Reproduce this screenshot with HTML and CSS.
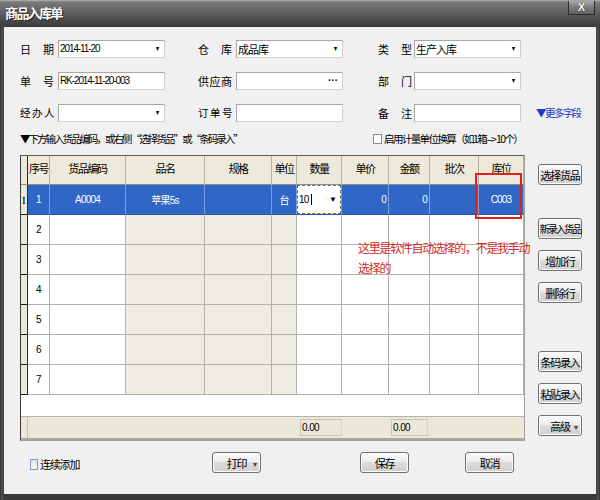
FILE: index.html
```html
<!DOCTYPE html>
<html lang="zh-CN">
<head>
<meta charset="utf-8">
<title>商品入库单</title>
<link rel="stylesheet" href="styles.css">
</head>
<body>
<div class="window">
  <div class="titlebar">
    <span class="title">商品入库单</span>
    <span class="close">X</span>
  </div>
  <div class="client">
    <div class="form">
      <span class="lbl">日期</span><div class="field combo"><span class="val">2014-11-20</span></div>
      <span class="lbl">仓库</span><div class="field combo"><span class="val cjk">成品库</span></div>
      <span class="lbl">类型</span><div class="field combo"><span class="val cjk">生产入库</span></div>
      <span></span>

      <span class="lbl">单号</span><div class="field"><span class="val">RK-2014-11-20-003</span></div>
      <span class="lbl">供应商</span><div class="field dots"></div>
      <span class="lbl">部门</span><div class="field combo"></div>
      <span></span>

      <span class="lbl sp">经办人</span><div class="field combo"></div>
      <span class="lbl sp">订单号</span><div class="field"></div>
      <span class="lbl">备注</span><div class="field"></div>
      <span class="more">▼更多字段</span>
    </div>

    <div class="hint-row">
      <span class="hint">▼下方输入货品编码，或右侧 “选择货品” 或“条码录入”</span>
      <span class="chk"><span class="box"></span>启用计量单位换算（如1箱 --&gt; 10个）</span>
    </div>

    <div class="main">
      <div class="grid">
        <table class="tbl">
          <colgroup>
            <col class="w-rh"><col class="w-no"><col class="w-code"><col class="w-name"><col class="w-spec"><col class="w-unit"><col class="w-qty"><col class="w-price"><col class="w-amt"><col class="w-batch"><col class="w-loc">
          </colgroup>
          <thead>
            <tr>
              <th class="rh"></th><th>序号</th><th>货品编码</th><th>品名</th><th>规格</th><th>单位</th><th>数量</th><th>单价</th><th>金额</th><th>批次</th><th>库位</th>
            </tr>
          </thead>
          <tbody>
            <tr class="sel">
              <td class="rh"><span class="ibeam">I</span></td>
              <td class="ctr">1</td>
              <td class="ctr">A0004</td>
              <td class="ctr">苹果5s</td>
              <td></td>
              <td class="ctr">台</td>
              <td class="edit"><div class="editor"><span>10</span><span class="caret"></span><span class="dd">▼</span></div></td>
              <td class="rt">0</td>
              <td class="rt">0</td>
              <td></td>
              <td class="ctr">C003</td>
            </tr>
            <tr><td class="rh"></td><td class="ctr">2</td><td></td><td class="ro"></td><td class="ro"></td><td class="ro"></td><td></td><td></td><td></td><td></td><td></td></tr>
            <tr><td class="rh"></td><td class="ctr">3</td><td></td><td class="ro"></td><td class="ro"></td><td class="ro"></td><td></td><td></td><td></td><td></td><td></td></tr>
            <tr><td class="rh"></td><td class="ctr">4</td><td></td><td class="ro"></td><td class="ro"></td><td class="ro"></td><td></td><td></td><td></td><td></td><td></td></tr>
            <tr><td class="rh"></td><td class="ctr">5</td><td></td><td class="ro"></td><td class="ro"></td><td class="ro"></td><td></td><td></td><td></td><td></td><td></td></tr>
            <tr><td class="rh"></td><td class="ctr">6</td><td></td><td class="ro"></td><td class="ro"></td><td class="ro"></td><td></td><td></td><td></td><td></td><td></td></tr>
            <tr><td class="rh"></td><td class="ctr">7</td><td></td><td class="ro"></td><td class="ro"></td><td class="ro"></td><td></td><td></td><td></td><td></td><td></td></tr>
          </tbody>
        </table>
        <div class="filler"></div>
        <div class="footer">
          <span class="f-rh"></span>
          <span class="f-qty"><span class="sum">0.00</span></span>
          <span class="f-amt"><span class="sum">0.00</span></span>
        </div>
      </div>

      <div class="side">
        <span class="btn">选择货品</span>
        <span class="btn tight g1">新录入货品</span>
        <span class="btn">增加行</span>
        <span class="btn">删除行</span>
        <span class="btn g2">条码录入</span>
        <span class="btn">粘贴录入</span>
        <span class="btn drop">高级<span class="tri">▾</span></span>
      </div>
    </div>

    <div class="bottom">
      <span class="chk2"><span class="box2"></span>连续添加</span>
      <span class="btn wide drop b-print">打印<span class="tri">▾</span></span>
      <span class="btn wide b-save">保存</span>
      <span class="btn wide b-cancel">取消</span>
    </div>
  </div>

  <div class="redbox"></div>
  <div class="note">这里是软件自动选择的，不是我手动<br>选择的</div>
</div>
</body>
</html>
```

FILE: styles.css
```css
html, body {
  margin: 0;
  padding: 0;
}
body {
  width: 600px;
  height: 500px;
  overflow: hidden;
  font-family: "Liberation Sans", "Noto Sans CJK SC", sans-serif;
  font-size: 12px;
  color: #000;
  background: #3c3c3c;
}
.window {
  position: relative;
  width: 600px;
  height: 500px;
  box-sizing: border-box;
  display: flex;
  flex-direction: column;
  background: linear-gradient(90deg, #2e2e2e 0, #555 2px, #3a3a3a 4px, #3a3a3a 596px, #555 598px, #2e2e2e 600px);
}
.titlebar {
  height: 26px;
  flex: none;
  display: flex;
  justify-content: space-between;
  align-items: center;
  padding: 0 5px 0 5px;
  background: linear-gradient(#b4b4b4 0, #7a7a7a 2px, #656565 40%, #4a4a4a 80%, #3c3c3c 100%);
}
.title {
  color: #fff;
  font-family: "Noto Sans CJK SC", sans-serif;
  font-size: 13px;
  font-weight: bold;
  letter-spacing: -1.6px;
  line-height: 16px;
  text-shadow: 1px 1px 1px #222;
}
.close {
  align-self: flex-start;
  margin-top: 1px;
  width: 27px;
  height: 14px;
  box-sizing: border-box;
  border: 1px solid #2a2a2a;
  border-top: none;
  background: linear-gradient(#a8a8a8, #7a7a7a 50%, #626262);
  color: #fff;
  font-family: "Liberation Sans", sans-serif;
  font-weight: bold;
  font-size: 11px;
  line-height: 13px;
  text-align: center;
  text-shadow: 0 0 1px #000;
}
.client {
  flex: 1;
  margin: 1px 4px 6px 4px;
  background: #f0f0f0;
  padding: 13px 0 0 16px;
  box-sizing: border-box;
}

/* form */
.form {
  display: grid;
  grid-template-columns: 38px 140px 38px 142px 36px 122px auto;
  grid-auto-rows: 18px;
  row-gap: 14px;
  align-items: center;
}
.lbl {
  width: 34px;
  font-family: "Noto Sans CJK SC", sans-serif;
  font-size: 11px;
  line-height: 14px;
  white-space: nowrap;
  text-align: justify;
  text-align-last: justify;
}
.lbl.sp { width: 33px; font-size: 10.5px; letter-spacing: 1.5px; }
.field {
  width: 107px;
  height: 18px;
  box-sizing: border-box;
  background: #fff;
  border: 1px solid #a7a7a7;
  border-right-color: #cfcfcf;
  border-bottom-color: #d4d4d4;
  display: flex;
  align-items: center;
  padding: 0 0 0 1px;
}
.val {
  font-family: "Liberation Sans", "Noto Sans CJK SC", sans-serif;
  font-size: 10px;
  letter-spacing: -1.1px;
  line-height: 14px;
  white-space: nowrap;
}
.val.cjk {
  font-family: "Noto Sans CJK SC", sans-serif;
  font-size: 11px;
  letter-spacing: -1px;
}
.combo::after {
  content: "▼";
  font-size: 7px;
  line-height: 8px;
  margin-left: auto;
  margin-right: 3px;
  transform: scaleX(0.8);
}
.dots::after {
  content: "···";
  font-size: 10px;
  font-weight: bold;
  line-height: 10px;
  margin-left: auto;
  margin-right: 4px;
}
.more {
  color: #2035c8;
  font-family: "Noto Sans CJK SC", sans-serif;
  font-size: 10.5px;
  letter-spacing: -1.6px;
  line-height: 14px;
  white-space: nowrap;
}

/* hint row */
.hint-row {
  margin-top: 9px;
  height: 15px;
  display: grid;
  grid-template-columns: 353px auto;
  align-items: center;
}
.hint {
  font-family: "Noto Sans CJK SC", sans-serif;
  font-size: 10.5px;
  letter-spacing: -2px;
  line-height: 14px;
  white-space: nowrap;
}
.chk {
  display: flex;
  align-items: center;
  font-family: "Noto Sans CJK SC", sans-serif;
  font-size: 10.5px;
  letter-spacing: -1.6px;
  line-height: 14px;
  white-space: nowrap;
}
.box {
  width: 9px;
  height: 10px;
  box-sizing: border-box;
  border: 1px solid #8c8c8c;
  background: #fff;
  margin-right: 2px;
}

/* main */
.main {
  margin-top: 9px;
  display: flex;
  align-items: flex-start;
}
.grid {
  width: 505px;
  height: 286px;
  box-sizing: border-box;
  background: #fff;
  border: 1px solid #a09f98;
  border-top-color: #5a5a5a;
  border-left-color: #3a3a3a;
  display: flex;
  flex-direction: column;
}
.tbl {
  table-layout: fixed;
  width: 503px;
  border-collapse: separate;
  border-spacing: 0;
  font-family: "Noto Sans CJK SC", sans-serif;
  font-size: 11px;
}
.w-rh { width: 7px; }
.w-no { width: 22px; }
.w-code { width: 76px; }
.w-name { width: 79px; }
.w-spec { width: 67px; }
.w-unit { width: 25px; }
.w-qty { width: 45px; }
.w-price { width: 47px; }
.w-amt { width: 41px; }
.w-batch { width: 49px; }
.w-loc { width: 45px; }

.tbl th, .tbl td {
  padding: 0;
  border-right: 1px solid #b3b2aa;
  border-bottom: 1px solid #b3b2aa;
  overflow: hidden;
  white-space: nowrap;
}
.tbl thead tr { height: 29px; }
.tbl th {
  background: #edeadb;
  font-weight: normal;
  letter-spacing: -1.4px;
  line-height: 14px;
  border-bottom-color: #8f8e86;
  vertical-align: middle;
  padding-bottom: 4px;
}
.tbl tbody tr { height: 30px; }
.tbl td {
  vertical-align: middle;
  font-family: "Liberation Sans", "Noto Sans CJK SC", sans-serif;
  font-size: 10px;
  letter-spacing: -0.8px;
}
.tbl .rh {
  background: #ebe8d9;
  border-right: 1px solid #2a2a2a;
  border-bottom: 1px solid #1a1a1a;
}
.tbl th.rh { border-bottom-color: #8f8e86; }
.ibeam {
  font-family: "Liberation Serif", serif;
  font-size: 11px;
  padding-left: 1px;
}
.tbl td.ro { background: #efece1; }
.ctr { text-align: center; }
.rt { text-align: right; padding-right: 2px !important; }

.tbl tr.sel td {
  background: #3067c7;
  color: #fff;
  border-right-color: #7aa0e0;
  border-bottom-color: #2a55a8;
}
.tbl tr.sel td.rh {
  background: #ebe8d9;
  color: #000;
  border-right-color: #2a2a2a;
  border-bottom-color: #1a1a1a;
}
.tbl tr.sel td.edit {
  background: #fff;
  color: #000;
  padding: 0;
}
.editor {
  height: 29px;
  box-sizing: border-box;
  border: 1px dashed #666;
  display: flex;
  align-items: center;
  padding-left: 1px;
}
.caret {
  width: 1px;
  height: 11px;
  background: #000;
  margin-left: 2px;
}
.dd {
  margin-left: auto;
  margin-right: 4px;
  font-size: 8px;
}
.filler {
  flex: 1;
  background: #fff;
}
.footer {
  height: 24px;
  box-sizing: border-box;
  background: #ebe8d9;
  border-top: 1px solid #b3b2aa;
  border-bottom: 2px solid #a9a897;
  display: grid;
  grid-template-columns: 7px 22px 76px 79px 67px 25px 45px 47px 41px 49px 45px;
  align-items: center;
}
.f-rh {
  grid-column: 1;
  height: 100%;
  border-right: 1px solid #c0bfb0;
}
.f-qty { grid-column: 7; }
.f-amt { grid-column: 9; }
.sum {
  display: block;
  height: 17px;
  box-sizing: border-box;
  border: 1px solid #c7c4b0;
  border-right-color: #d8d5c4;
  font-family: "Liberation Sans", sans-serif;
  font-size: 10px;
  letter-spacing: -0.6px;
  line-height: 15px;
  padding-left: 1px;
}
.f-qty .sum { margin-left: 3px; width: 42px; }
.f-amt .sum { margin-left: 2px; width: 37px; }

/* side buttons */
.side {
  margin-left: 13px;
  padding-top: 9px;
  display: flex;
  flex-direction: column;
  gap: 11px;
}
.btn {
  width: 44px;
  height: 21px;
  box-sizing: border-box;
  border: 1px solid #707070;
  border-radius: 3px;
  background: linear-gradient(#fbfbfb 0, #ececec 45%, #dcdcdc 50%, #d0d0d0 100%);
  box-shadow: inset 0 0 0 1px #fdfdfd;
  display: flex;
  align-items: center;
  justify-content: center;
  font-family: "Noto Sans CJK SC", sans-serif;
  font-size: 11px;
  letter-spacing: -1.2px;
  line-height: 14px;
  white-space: nowrap;
}
.btn.tight { font-size: 10px; letter-spacing: -1.9px; }
.side .g1 { margin-top: 22px; }
.side .g2 { margin-top: 37px; }
.btn.drop { position: relative; }
.tri {
  position: absolute;
  right: 4px;
  top: 4px;
  font-size: 8px;
  color: #444;
}
.btn.wide { width: 49px; }

/* bottom */
.bottom {
  margin-top: 11px;
  display: flex;
  align-items: center;
  height: 21px;
  margin-left: -16px;
}
.chk2 {
  margin-left: 26px;
  display: flex;
  align-items: center;
  font-family: "Noto Sans CJK SC", sans-serif;
  font-size: 11px;
  letter-spacing: -1.2px;
  line-height: 14px;
  margin-top: 3px;
  width: 182px;
}
.box2 {
  width: 8px;
  height: 11px;
  box-sizing: border-box;
  border: 1px solid #8899b8;
  background: linear-gradient(#dfe6f2, #f4f6fa);
  margin-right: 2px;
}
.b-save { margin-left: 99px; }
.b-cancel { margin-left: 56px; }

/* overlay annotation */
.redbox {
  position: absolute;
  left: 475px;
  top: 173px;
  width: 47px;
  height: 46px;
  box-sizing: border-box;
  border: 2px solid #e0201c;
}
.note {
  position: absolute;
  left: 358px;
  top: 238px;
  color: #d42a2a;
  font-family: "Noto Sans CJK SC", sans-serif;
  font-size: 12px;
  letter-spacing: -1.3px;
  line-height: 20px;
  white-space: nowrap;
}
```
